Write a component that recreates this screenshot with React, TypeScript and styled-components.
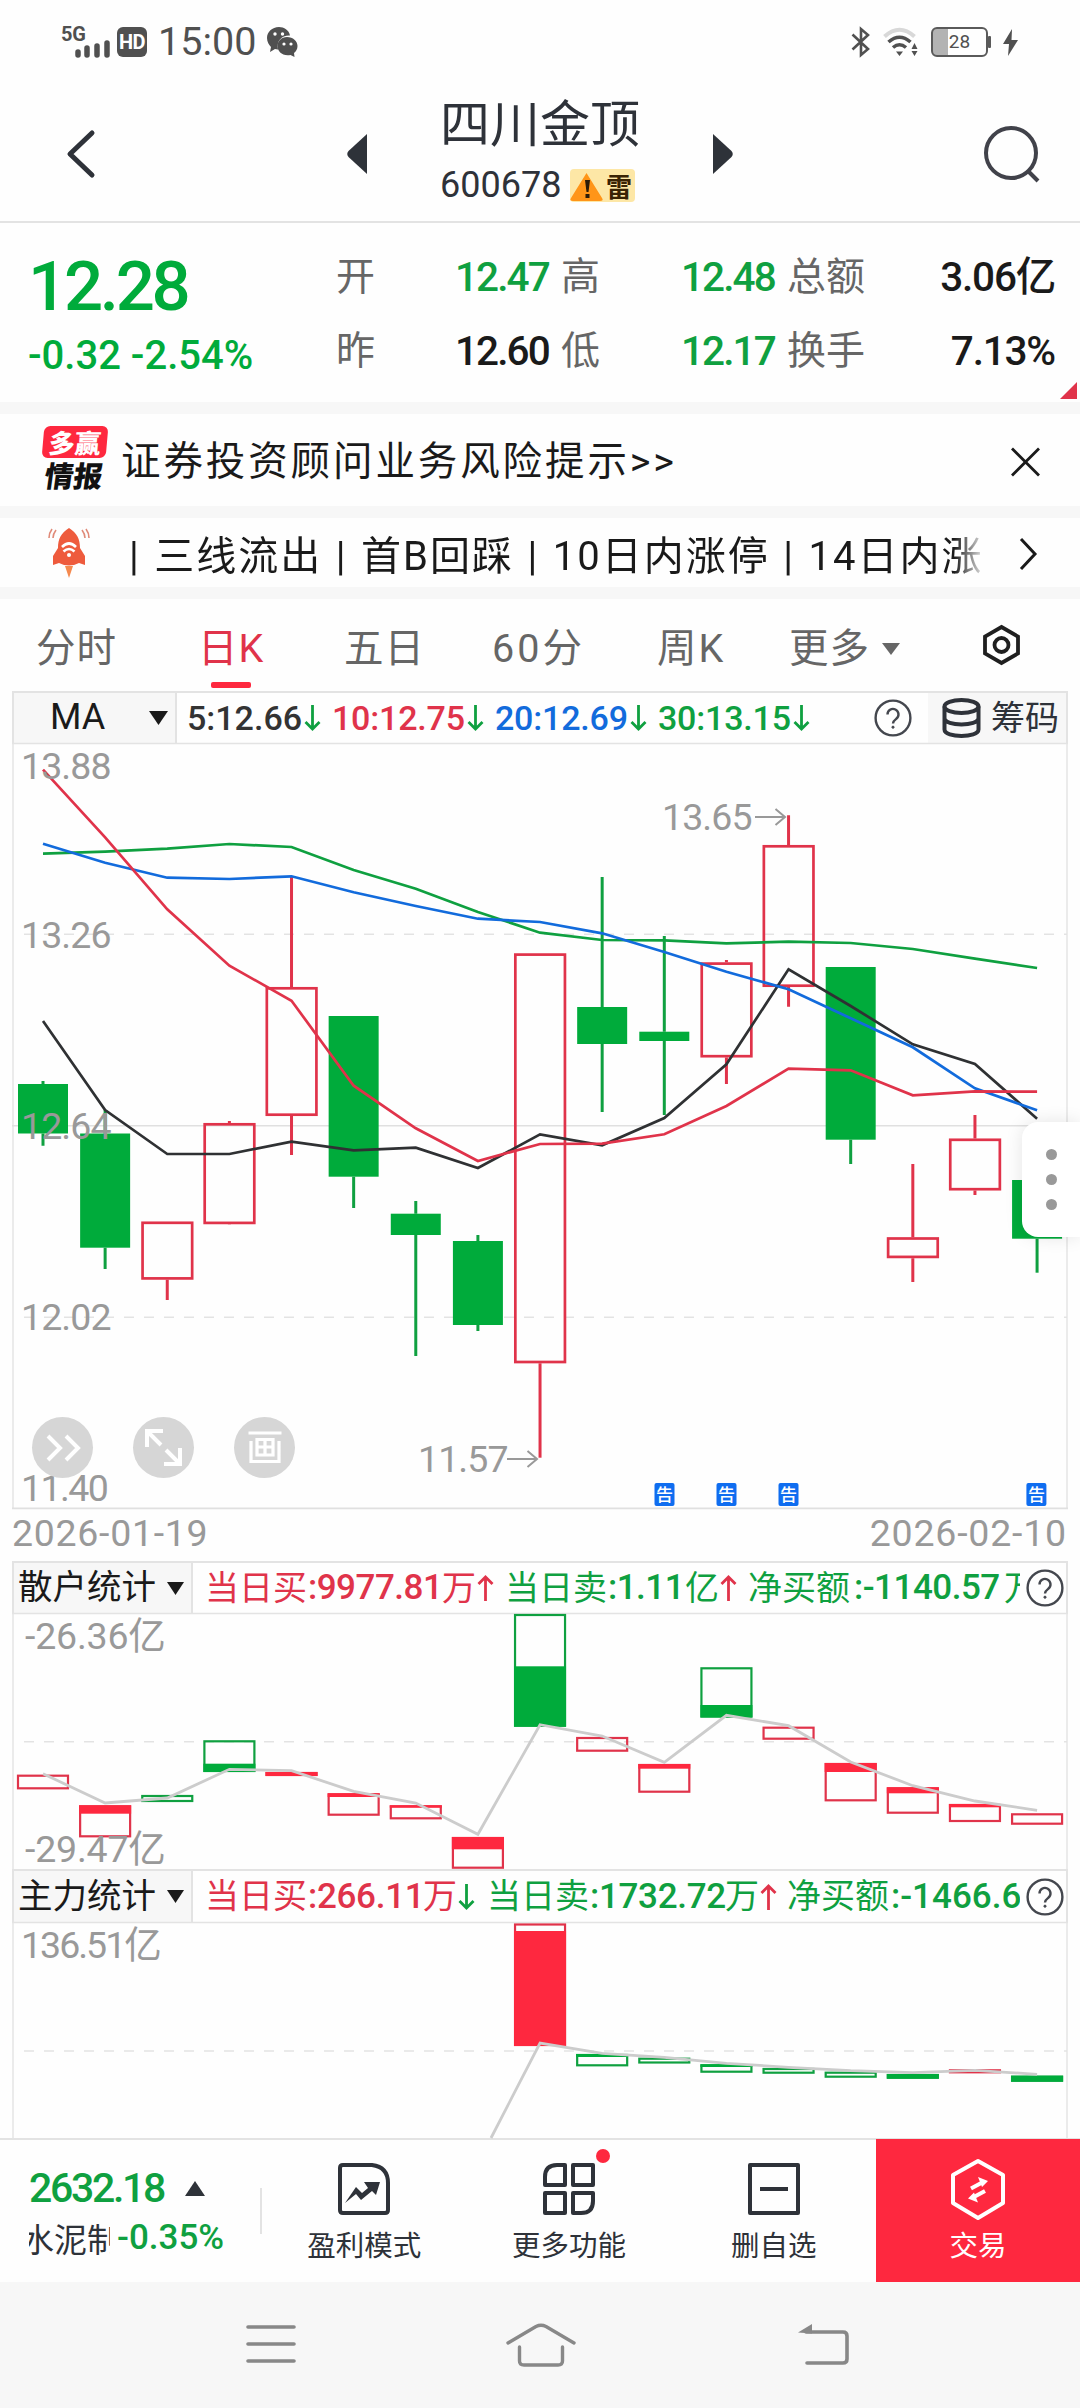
import React from 'react';
import styled, { createGlobalStyle } from 'styled-components';

const RED = '#e0334a';
const HOT = '#fe283f';
const GREEN = '#0fa040';
const FILL = '#00ab3b';
const BLUE = '#126bdc';
const INK = '#2e3239';
const GREY = '#999';
const LINE = '#e3e3e3';

const Global = createGlobalStyle`
  * { box-sizing: border-box; }
  body { margin: 0; background: #fff; }
`;

const Page = styled.div`
  width: 1080px;
  height: 2408px;
  overflow: hidden;
  display: flex;
  flex-direction: column;
  background: #fefefe;
  color: #1a1a1a;
  font-family: Roboto, 'Noto Sans CJK SC', sans-serif;
  white-space: nowrap;
`;

const Band = styled.div`
  flex: none;
  height: 12px;
  background: #f7f7f7;
`;

const Txt = styled.span<{ $size: number; $color?: string; $weight?: number; $ls?: number; $w?: number; $mt?: number }>`
  display: block;
  flex: none;
  margin-top: ${(p) => p.$mt ?? 0}px;
  font-size: ${(p) => p.$size}px;
  line-height: 1.2;
  color: ${(p) => p.$color ?? 'inherit'};
  font-weight: ${(p) => p.$weight ?? 400};
  letter-spacing: ${(p) => p.$ls ?? 0}px;
  ${(p) => (p.$w ? `width: ${p.$w}px;` : '')}
`;

const Icon = styled.svg<{ $mr?: number; $mt?: number }>`
  display: block;
  flex: none;
  overflow: visible;
  margin-right: ${(p) => p.$mr ?? 0}px;
  margin-top: ${(p) => p.$mt ?? 0}px;
`;

/* ---------- status bar ---------- */

const StatusBar = styled.header`
  flex: none;
  height: 84px;
  padding: 0 62px;
  display: flex;
  align-items: center;
  justify-content: space-between;
  color: #505050;
`;

const StatusGroup = styled.div<{ $gap: number }>`
  display: flex;
  align-items: center;
  gap: ${(p) => p.$gap}px;
`;

const HdBadge = styled.div`
  width: 30px;
  height: 30px;
  border-radius: 6px;
  background: #505050;
  color: #fff;
  font: 700 20px/30px Roboto, sans-serif;
  letter-spacing: -0.5px;
  text-align: center;
`;

const Battery = styled.div`
  width: 57px;
  height: 30px;
  border: 2.5px solid #5a5a5a;
  border-radius: 6px;
  background: linear-gradient(90deg, #b3b3b3 15px, transparent 15px);
  font: 400 19px/25px Roboto, sans-serif;
  text-align: center;
`;

/* ---------- title bar ---------- */

const TitleBar = styled.div`
  flex: none;
  height: 139px;
  border-bottom: 2px solid ${LINE};
  padding: 3px 40px 0 67px;
  display: flex;
  align-items: center;
  color: ${INK};
`;

const TitleCenter = styled.div`
  width: 387px;
  margin: 0 251px 0 252px;
  display: flex;
  align-items: center;
  justify-content: space-between;
`;

const TitleText = styled.div`
  display: flex;
  flex-direction: column;
  align-items: flex-start;
  width: 200px;
  padding-bottom: 6px;
`;

const CodeRow = styled.div`
  display: flex;
  align-items: center;
  gap: 8px;
  margin-top: 9px;
`;

const RiskBadge = styled.div`
  width: 65px;
  height: 33px;
  border-radius: 4px;
  background: #fde7a6;
  display: flex;
  align-items: center;
  font: 700 26px/33px 'Noto Sans CJK SC', sans-serif;
  color: #3a2305;
`;

/* ---------- quote ---------- */

const Quote = styled.section`
  position: relative;
  flex: none;
  height: 179px;
  padding: 0 25px 0 28px;
  display: flex;
`;

const PriceBlock = styled.div`
  width: 308px;
  padding-top: 23px;
  color: ${FILL};
`;

const Stats = styled.div`
  flex: 1;
  padding-top: 17px;
  display: grid;
  grid-template-columns: 119px 106px 120px 106px 78px 1fr;
  grid-auto-rows: 74px;
  align-items: center;
  height: 165px;
`;

const StatLabel = styled.span`
  font-size: 39px;
  line-height: 74px;
  color: #666;
`;

const StatValue = styled.span<{ $color: string; $right?: boolean }>`
  font-size: 40.5px;
  line-height: 74px;
  font-weight: 500;
  letter-spacing: ${(p) => (p.$right ? -1.2 : -1.9)}px;
  color: ${(p) => p.$color};
  text-align: ${(p) => (p.$right ? 'right' : 'left')};
`;

const Corner = styled.div`
  position: absolute;
  right: 3px;
  bottom: 3px;
  border-left: 17px solid transparent;
  border-bottom: 17px solid ${RED};
`;

/* ---------- notices ---------- */

const Notice = styled.section`
  flex: none;
  height: 92px;
  padding: 0 40px 0 41px;
  display: flex;
  align-items: center;
`;

const Logo = styled.div`
  width: 67px;
  height: 68px;
  margin-right: 13px;
  display: flex;
  flex-direction: column;
  align-items: center;
`;

const LogoTop = styled.div`
  width: 64px;
  height: 32px;
  border-radius: 6px;
  background: ${HOT};
  color: #fff;
  font: 900 26px/31px 'Noto Sans CJK SC', sans-serif;
  text-align: center;
  transform: skewX(-5deg);
`;

const LogoBottom = styled.div`
  margin-top: 2px;
  font: 900 29px/29px 'Noto Sans CJK SC', sans-serif;
  color: #111;
  transform: skewX(-8deg);
`;

const Spacer = styled.div`
  flex: 1;
`;

const Ticker = styled.section`
  flex: none;
  height: 69px;
  padding: 0 43px 0 48px;
  display: flex;
  align-items: center;
`;

const TickerText = styled.div`
  width: 855px;
  margin-left: 39px;
  overflow: hidden;
  font-size: 40px;
  line-height: 60px;
  letter-spacing: 2px;
  word-spacing: 1.6px;
  padding-top: 9px;
  mask-image: linear-gradient(90deg, #000 825px, transparent 858px);
`;

/* ---------- tabs ---------- */

const Tabs = styled.nav`
  flex: none;
  height: 92px;
  padding-left: 36px;
  display: flex;
`;

const Tab = styled.div<{ $w: number; $on?: boolean; $ls?: number }>`
  width: ${(p) => p.$w}px;
  padding-top: 22px;
  font-size: 39.5px;
  line-height: 55px;
  letter-spacing: ${(p) => p.$ls ?? 1}px;
  color: ${(p) => (p.$on ? RED : '#666')};
  display: flex;
  flex-direction: column;
`;

const Underline = styled.div`
  width: 40px;
  height: 6px;
  margin: 6px 0 0 13px;
  border-radius: 2px;
  background: ${HOT};
`;

const TabRow = styled.div`
  display: flex;
  align-items: center;
  gap: 12px;
`;

/* ---------- indicator headers ---------- */

const Bar = styled.div<{ $h: number }>`
  flex: none;
  width: 1056px;
  height: ${(p) => p.$h}px;
  margin-left: 12px;
  border: 2px solid ${LINE};
  border-bottom: 0;
  display: flex;
  align-items: center;
`;

const Selector = styled.div<{ $w: number; $pad: number }>`
  flex: none;
  width: ${(p) => p.$w}px;
  align-self: stretch;
  padding: 0 7px 0 ${(p) => p.$pad}px;
  background: #f7f7f7;
  border-right: 2px solid ${LINE};
  display: flex;
  align-items: center;
  justify-content: space-between;
`;

const Values = styled.div<{ $w: number; $pad: number }>`
  flex: none;
  width: ${(p) => p.$w}px;
  padding-left: ${(p) => p.$pad}px;
  overflow: hidden;
  display: flex;
  align-items: center;
`;

const Chips = styled.div`
  flex: 1;
  align-self: stretch;
  background: #f7f7f7;
  display: flex;
  align-items: center;
  padding-left: 14px;
  gap: 10px;
  color: ${INK};
`;

const HelpWrap = styled.div<{ $l: number; $r: number }>`
  margin: 0 ${(p) => p.$r}px 0 ${(p) => p.$l}px;
`;

/* ---------- charts ---------- */

const Plot = styled.div<{ $h: number }>`
  position: relative;
  flex: none;
  width: 1080px;
  height: ${(p) => p.$h}px;
`;

const Tools = styled.div`
  position: absolute;
  left: 32px;
  top: 674px;
  display: flex;
  gap: 40px;
`;

const ToolButton = styled.div`
  width: 61px;
  height: 61px;
  border-radius: 50%;
  background: #d6d6d6;
  display: flex;
  align-items: center;
  justify-content: center;
`;

const Drawer = styled.div`
  position: absolute;
  right: 0;
  top: 379px;
  width: 58px;
  height: 115px;
  border-radius: 16px 0 0 16px;
  background: #fff;
  box-shadow: 0 0 18px rgba(0, 0, 0, 0.1);
  display: flex;
  flex-direction: column;
  align-items: center;
  justify-content: center;
  gap: 14px;
`;

const Dot = styled.i`
  width: 11px;
  height: 11px;
  border-radius: 50%;
  background: ${GREY};
`;

const Dates = styled.div`
  flex: none;
  height: 52px;
  padding: 0 13px 4px 12px;
  display: flex;
  align-items: center;
  justify-content: space-between;
`;

/* ---------- bottom ---------- */

const Bottom = styled.footer`
  flex: none;
  height: 144px;
  border-top: 2px solid ${LINE};
  display: flex;
  color: ${INK};
`;

const IndexBlock = styled.div`
  width: 262px;
  padding: 24px 0 0 29px;
`;

const IndexRow = styled.div<{ $gap: number }>`
  display: flex;
  align-items: center;
  gap: ${(p) => p.$gap}px;
`;

const Sector = styled.div`
  width: 81px;
  height: 50px;
  padding-top: 3px;
  overflow: hidden;
  display: flex;
  font-size: 33px;
  line-height: 50px;
  text-indent: -8px;
`;

const Divider = styled.div`
  width: 2px;
  height: 46px;
  margin: 48px 0 0 -2px;
  background: ${LINE};
`;

const Action = styled.div<{ $hot?: boolean }>`
  position: relative;
  flex: none;
  width: ${(p) => (p.$hot ? 204 : 204.7)}px;
  margin-top: ${(p) => (p.$hot ? -1 : 0)}px;
  padding-top: ${(p) => (p.$hot ? 20 : 23)}px;
  background: ${(p) => (p.$hot ? HOT : 'transparent')};
  color: ${(p) => (p.$hot ? '#fff' : INK)};
  display: flex;
  flex-direction: column;
  align-items: center;
  font-size: 28.5px;
  line-height: 40px;
  gap: ${(p) => (p.$hot ? 7 : 12)}px;
`;

const Badge = styled.i`
  position: absolute;
  right: 61px;
  top: 9px;
  width: 14px;
  height: 14px;
  border-radius: 50%;
  background: ${HOT};
`;

const NavBar = styled.div`
  flex: none;
  height: 126px;
  padding: 0 0 1px 246px;
  background: #f7f7f7;
  display: grid;
  grid-template-columns: 260px 292px 51px;
  align-items: center;
`;

/* ---------- small drawings ---------- */

const Caret = ({ w = 18, h = 13, color = '#1a1a1a', up = false }) => (
  <Icon width={w} height={h} viewBox={`0 0 ${w} ${h}`}>
    <path d={up ? `M0 ${h}L${w / 2} 0L${w} ${h}Z` : `M0 0H${w}L${w / 2} ${h}Z`} fill={color} />
  </Icon>
);

const Arrow = ({ up = false, color = GREEN, gap = 12 }) => (
  <Icon width={17} height={26} viewBox="0 0 17 26" $mr={gap}>
    <path
      d={up ? 'M8.5 26V2M1.5 9L8.5 2L15.5 9' : 'M8.5 0V24M1.5 17L8.5 24L15.5 17'}
      fill="none"
      stroke={color}
      strokeWidth={2.8}
    />
  </Icon>
);

const Help = () => (
  <Icon width={38} height={38} viewBox="0 0 38 38" fill="none" stroke="#44474e" strokeWidth={2.4}>
    <circle cx="19" cy="19" r="17.4" />
    <path d="M13.5 15.5a5.5 5.5 0 1 1 8.8 4.3c-2.2 1.7-3.3 2.4-3.3 4.6" />
    <circle cx="19" cy="28.2" r="1.1" fill="#44474e" strokeWidth={1} />
  </Icon>
);

const cx = (i: number) => 43 + 62.13 * i;
const pts = (ys: number[], from = 0) => ys.map((y, i) => `${cx(i + from)},${y}`).join(' ');

type Candle = [up: boolean, high: number, top: number, bottom: number, low: number];
const candles: Candle[] = [
  [false, 1081, 1084, 1133.5, 1145.7],
  [false, 1110, 1133.5, 1247.7, 1269],
  [true, 1221.5, 1221.5, 1279.7, 1300],
  [true, 1121, 1123, 1224.2, 1224],
  [true, 877, 987, 1116, 1155],
  [false, 1016, 1016, 1176.7, 1208],
  [false, 1201, 1213.7, 1235, 1356],
  [false, 1235, 1241, 1325, 1331],
  [true, 953.3, 953.3, 1363.3, 1457.7],
  [false, 877, 1007, 1044, 1112],
  [false, 936, 1031.7, 1041, 1115],
  [true, 960, 962.3, 1057.5, 1084],
  [true, 815.3, 845, 987, 1006.7],
  [false, 967, 967, 1139.7, 1164],
  [true, 1164, 1237.2, 1258.2, 1282],
  [true, 1115, 1138.5, 1190.5, 1195],
  [false, 1180, 1180, 1238.7, 1272.7],
];

const averages: [string, number[]][] = [
  ['#2f3133', [1021, 1110, 1154, 1154, 1141.7, 1150.3, 1147.7, 1168, 1134.3, 1145.3, 1118, 1064.3, 969.3, 1006, 1044.3, 1064, 1118.7]],
  [GREEN, [853.7, 851.7, 848.7, 844, 847, 870, 888.7, 912, 932.7, 940, 940.3, 943.3, 941.7, 943, 949, 958.7, 968]],
  [BLUE, [843.7, 862.7, 877.7, 879, 876.3, 892.3, 906, 918.7, 922, 933.3, 952, 971.7, 989.3, 1018.3, 1047.3, 1088.3, 1110.3]],
  [RED, [769.7, 837.3, 909.3, 965.7, 1000.7, 1085.7, 1128.3, 1161, 1144, 1143.7, 1134.3, 1106, 1068.7, 1070.3, 1095.3, 1091.3, 1091.7]],
];

type Flow = [i: number, up: boolean, top: number, bottom: number, fillFrom: number, fillTo: number];
const retail: Flow[] = [
  [0, true, 1774.7, 1789.3, 0, 0],
  [1, true, 1805.3, 1837.3, 1805.3, 1813.7],
  [2, false, 1795, 1802, 0, 0],
  [3, false, 1740.3, 1772, 1763.7, 1772],
  [4, true, 1772, 1776, 1772, 1776],
  [5, true, 1793.3, 1815.7, 1793.3, 1797],
  [6, true, 1805.3, 1819.3, 1805.3, 1807.7],
  [7, true, 1837, 1868.7, 1837, 1849.3],
  [8, false, 1614, 1726.7, 1666.3, 1726.7],
  [9, true, 1737, 1751.7, 0, 0],
  [10, true, 1764, 1792.7, 1764, 1768.7],
  [11, false, 1667.3, 1717.5, 1705, 1717.5],
  [12, true, 1726.7, 1739.7, 0, 0],
  [13, true, 1763, 1801.3, 1763, 1772],
  [14, true, 1787.3, 1813.7, 1787.3, 1793.3],
  [15, true, 1804, 1822, 1804, 1807.3],
  [16, true, 1813.3, 1824.7, 0, 0],
];
const retailLine = [1773.7, 1803, 1798, 1769.3, 1770.7, 1791.3, 1803, 1834.3, 1724.7, 1736, 1762.3, 1715.3, 1725.7, 1762, 1785.7, 1801, 1810.3];

const major: Flow[] = [
  [8, true, 1923.5, 2046, 1931, 2046],
  [9, false, 2054, 2066.3, 2054, 2057],
  [10, false, 2057.7, 2063.5, 0, 0],
  [11, false, 2064.3, 2072.7, 2064.3, 2067],
  [12, false, 2068, 2073.7, 0, 0],
  [13, false, 2071.7, 2077.7, 0, 0],
  [14, false, 2074, 2078.7, 2074, 2078.7],
  [15, true, 2069.3, 2073.3, 0, 0],
  [16, false, 2075.7, 2081.7, 2075.7, 2081.7],
];
const majorLine = [2043, 2053.3, 2057.3, 2063.3, 2067.3, 2070.7, 2072.7, 2070.3, 2074.3];

const AxisText = styled.text<{ $ls?: number }>`
  font-family: Roboto, 'Noto Sans CJK SC', sans-serif;
  font-size: 37.5px;
  letter-spacing: ${(p) => p.$ls ?? -0.9}px;
  fill: ${GREY};
`;

const BadgeText = styled.text`
  font-family: 'Noto Sans CJK SC', sans-serif;
  font-size: 17px;
  font-weight: 500;
  fill: #fff;
  text-anchor: middle;
`;

const Frame = ({ top, height, mids }: { top: number; height: number; mids: number[] }) => (
  <g fill="none" stroke={LINE}>
    <path d={`M13 ${top}V${top + height}M1067 ${top}V${top + height}M12 ${top + 0.5}H1068`} strokeWidth={1.4} />
    {mids.map((y) => (
      <path key={y} d={`M24 ${y}H1067`} strokeWidth={1.4} strokeDasharray="10 10" />
    ))}
  </g>
);

const KChart = () => (
  <Icon width={1080} height={766} viewBox="0 743 1080 766">
    <Frame top={743} height={765} mids={[934.3, 1317.3]} />
    <path d="M12 1125.7H1067M12 1508.4H1068" stroke="#e0e0e0" strokeWidth={1.6} />
    {candles.map(([up, high, top, bottom, low], i) => (
      <g key={i} stroke={up ? RED : GREEN} strokeWidth={3}>
        <path d={`M${cx(i)} ${high}V${top}M${cx(i)} ${bottom}V${low}`} />
        {up ? (
          <rect x={cx(i) - 24.7} y={top + 1.3} width={49.6} height={bottom - top - 2.6} fill="none" strokeWidth={2.7} />
        ) : (
          <rect x={cx(i) - 25} y={top} width={50} height={bottom - top} fill={FILL} stroke="none" />
        )}
      </g>
    ))}
    {averages.map(([color, ys]) => (
      <polyline key={color} points={pts(ys)} fill="none" stroke={color} strokeWidth={2.7} />
    ))}
    {([['13.88', 778.5, -0.9], ['13.26', 947.5, -0.9], ['12.64', 1139.3, -0.9], ['12.02', 1330.3, -0.9], ['11.40', 1500.5, -1.6]] as const).map(([t, y, ls]) => (
      <AxisText key={t} x={21} y={y} $ls={ls}>{t}</AxisText>
    ))}
    <AxisText x={662} y={830}>13.65</AxisText>
    <AxisText x={418} y={1472}>11.57</AxisText>
    <path d="M755 817H785M775.5 809L785 817L775.5 825M507 1459H537M527.5 1451L537 1459L527.5 1467" fill="none" stroke={GREY} strokeWidth={2} />
    {[664.5, 726.5, 788.5, 1036.4].map((x) => (
      <g key={x}>
        <rect x={x - 10} y={1483} width={20} height={23} rx={2} fill="#0f6df0" />
        <BadgeText x={x} y={1501}>告</BadgeText>
      </g>
    ))}
  </Icon>
);

const FlowChart = ({ top, height, mid, rows, line, labels }: {
  top: number; height: number; mid: number; rows: Flow[]; line: string; labels: [string, number][];
}) => (
  <Icon width={1080} height={height} viewBox={`0 ${top} 1080 ${height}`}>
    <Frame top={top} height={height} mids={[mid]} />
    {rows.map(([i, up, y1, y2, f1, f2]) => (
      <g key={i}>
        <rect x={cx(i) - 25} y={y1 + 1} width={50} height={Math.max(1, y2 - y1 - 2)} fill="none" stroke={up ? RED : GREEN} strokeWidth={2.2} />
        {f2 > f1 && <rect x={cx(i) - 26} y={f1} width={52} height={f2 - f1} fill={up ? HOT : FILL} />}
      </g>
    ))}
    <polyline points={line} fill="none" stroke="#ccc" strokeWidth={2.8} />
    {labels.map(([t, y]) => (
      <AxisText key={t} x={t[0] === '-' ? 25 : 21} y={y} $ls={t[0] === '-' ? -0.2 : -2}>{t}</AxisText>
    ))}
  </Icon>
);

const FlowHeader = ({ name, h, children }: { name: string; h: number; children: React.ReactNode }) => (
  <Bar $h={h}>
    <Selector $w={179} $pad={4}>
      <Txt $size={34.5}>{name}</Txt>
      <Caret w={17} h={13} />
    </Selector>
    <Values $w={827} $pad={12}>{children}</Values>
    <HelpWrap $l={6} $r={0}><Help /></HelpWrap>
  </Bar>
);

const Cn = ({ c, w, children }: { c: string; w: number; children: React.ReactNode }) => (
  <Txt $size={34} $color={c} $w={w}>{children}</Txt>
);
const Num = ({ c, w, ls = -0.5, children }: { c: string; w: number; ls?: number; children: React.ReactNode }) => (
  <Txt $size={35} $color={c} $w={w} $weight={500} $ls={ls}>{children}</Txt>
);

export default function App() {
  return (
    <Page>
      <Global />
      <StatusBar>
        <StatusGroup $gap={7}>
          <Icon width={48} height={32} viewBox="62 25 48 32">
            <text x="61" y="39.5" fontSize="20" fontWeight="700" fontFamily="Roboto, sans-serif" fill="#505050" textLength="25">5G</text>
            <path d="M78 51V54M87 47V54M97 45V54M107 42V54" stroke="#505050" strokeWidth={5.5} strokeLinecap="round" />
          </Icon>
          <StatusGroup $gap={11}>
            <HdBadge>HD</HdBadge>
            <Txt $size={39.5} $w={98}>15:00</Txt>
            <Icon width={31} height={30} viewBox="0 0 31 30" fill="#505050">
              <path d="M12 0C5 0 0 5 0 11c0 4 2 7 4 9l-1 5 5-3 3 .5C9 14 15 8 23 8.500C22 3 17 0 12 0Z" />
              <path d="M20 10c6 0 10.500 4 10.500 9 0 3-1.500 5.500-3.500 7l.5 4-4-2c-8 1.500-13-3.500-13-9 0-5 4-9 9.500-9Z" />
              <g fill="#fff"><circle cx="8" cy="7" r="1.700" /><circle cx="15.500" cy="7" r="1.700" /><circle cx="17" cy="17" r="1.600" /><circle cx="24" cy="17" r="1.600" /></g>
            </Icon>
          </StatusGroup>
        </StatusGroup>
        <StatusGroup $gap={12}>
          <Icon width={20} height={30} viewBox="0 0 20 30" fill="none" stroke="#505050" strokeWidth={2.6}>
            <path d="M1.500 7.500L17 22L10 28V2L17 8L1.500 22.500" />
          </Icon>
          <Icon width={36} height={28} viewBox="0 0 36 28" fill="none" strokeWidth={4}>
            <path d="M1.500 8.500Q16.500 -5 31.500 8.500" stroke="#d8d8d8" />
            <path d="M5.500 14Q16.500 4.500 27.500 14M10 19.500Q16.500 14 23 19.500" stroke="#505050" strokeWidth={3.6} />
            <path d="M13 23.500H20L16.500 28ZM28.500 21L31.500 15L34.500 21ZM28.500 23H34.500L31.500 28Z" fill="#505050" stroke="none" />
          </Icon>
          <StatusGroup $gap={0}>
            <Battery>28</Battery>
            <Icon width={3} height={12} viewBox="0 0 3 12"><rect width="3" height="12" rx="1" fill="#5a5a5a" /></Icon>
          </StatusGroup>
          <Icon width={15} height={27} viewBox="0 0 15 27"><path d="M9 0L0 15H6L5 27L15 11H8.500Z" fill="#505050" /></Icon>
        </StatusGroup>
      </StatusBar>

      <TitleBar>
        <Icon width={28} height={48} viewBox="0 0 28 48" fill="none" stroke={INK} strokeWidth={5} strokeLinecap="round" strokeLinejoin="round">
          <path d="M25 3L3 24L25 45" />
        </Icon>
        <TitleCenter>
          <Icon width={20} height={40} viewBox="0 0 20 40" fill={INK}><path d="M20 0V40L1.500 23Q-1 20 1.500 17Z" /></Icon>
          <TitleText>
            <Txt $size={50} $color={INK}>四川金顶</Txt>
            <CodeRow>
              <Txt $size={36} $w={122}>600678</Txt>
              <RiskBadge>
                <Icon width={36} height={33} viewBox="0 0 36 33">
                  <path d="M16.500 4L1 29Q-1 32 3 32H30Q34 32 32 29Z" fill="#ff9518" />
                  <path d="M15 11H20L18.500 23H16.500ZM15.500 25H19.500V29H15.500Z" fill="#2b1b08" />
                </Icon>
                雷
              </RiskBadge>
            </CodeRow>
          </TitleText>
          <Icon width={20} height={40} viewBox="0 0 20 40" fill={INK}><path d="M0 0V40L18.500 23Q21 20 18.500 17Z" /></Icon>
        </TitleCenter>
        <Icon width={56} height={56} viewBox="0 0 56 56" fill="none" stroke="#41424a" strokeWidth={4}>
          <circle cx="27" cy="27" r="25" />
          <path d="M44 45L54 55" />
        </Icon>
      </TitleBar>

      <Quote>
        <PriceBlock>
          <Txt $size={69} $weight={500} $ls={-3.3}>12.28</Txt>
          <Txt $size={40} $weight={500} $ls={0} $mt={3}>-0.32 -2.54%</Txt>
        </PriceBlock>
        <Stats>
          <StatLabel>开</StatLabel><StatValue $color={GREEN}>12.47</StatValue>
          <StatLabel>高</StatLabel><StatValue $color={GREEN}>12.48</StatValue>
          <StatLabel>总额</StatLabel><StatValue $color="#1a1a1a" $right>3.06亿</StatValue>
          <StatLabel>昨</StatLabel><StatValue $color="#1a1a1a">12.60</StatValue>
          <StatLabel>低</StatLabel><StatValue $color={GREEN}>12.17</StatValue>
          <StatLabel>换手</StatLabel><StatValue $color="#1a1a1a" $right>7.13%</StatValue>
        </Stats>
        <Corner />
      </Quote>
      <Band />

      <Notice>
        <Logo>
          <LogoTop>多赢</LogoTop>
          <LogoBottom>情报</LogoBottom>
        </Logo>
        <Txt $size={39.5} $ls={2.9} $mt={4}>证券投资顾问业务风险提示&gt;&gt;</Txt>
        <Spacer />
        <Icon $mt={4} width={29} height={28} viewBox="0 0 29 28" stroke="#1a1a1a" strokeWidth={2.8}><path d="M1 0.500L28 27.500M28 0.500L1 27.500" /></Icon>
      </Notice>
      <Band />

      <Ticker>
        <Icon width={42} height={50} viewBox="0 0 42 50">
          <path d="M21 0C29 5 32 11 32 20L37 28V37L31 35Q21 40 11 35L5 37V28L10 20C10 11 13 5 21 0Z" fill="#ee5b3d" />
          <path d="M17 38H25L21 50Z" fill="#f5894f" />
          <path d="M14 19Q21 12 28 19M15.500 23.500Q21 18.500 26.500 23.500" fill="none" stroke="#fff" strokeWidth={2.6} />
          <circle cx="21" cy="27" r="2" fill="#fff" />
          <path d="M8 2Q5 6 5 10M4 1Q1 5 1 10M34 2Q37 6 37 10M38 1Q41 5 41 10" fill="none" stroke="#e08a78" strokeWidth={1.6} />
        </Icon>
        <TickerText>| 三线流出 | 首B回踩 | 10日内涨停 | 14日内涨</TickerText>
        <Spacer />
        <Icon $mt={2} width={17} height={32} viewBox="0 0 17 32" fill="none" stroke="#1a1a1a" strokeWidth={3}><path d="M1 1L15 16L1 31" /></Icon>
      </Ticker>
      <Band />

      <Tabs>
        <Tab $w={162}>分时</Tab>
        <Tab $w={146} $on>日K<Underline /></Tab>
        <Tab $w={148}>五日</Tab>
        <Tab $w={165} $ls={3}>60分</Tab>
        <Tab $w={132} $ls={2}>周K</Tab>
        <Tab $w={194}><TabRow>更多<Caret w={18} h={12} color="#666" /></TabRow></Tab>
        <Tab $w={60}>
          <Icon $mt={4} width={37} height={40} viewBox="0 0 37 40" fill="none" stroke="#1f1f1f" strokeWidth={3.8}>
            <path d="M18.500 2L35 11.500V28.500L18.500 38L2 28.500V11.500Z" />
            <circle cx="18.500" cy="20" r="7" />
          </Icon>
        </Tab>
      </Tabs>

      <Bar $h={52}>
        <Selector $w={163} $pad={36}>
          <Txt $size={36}>MA</Txt>
          <Caret w={19} h={14} />
        </Selector>
        <Values $w={669} $pad={10}>
          <Txt $size={34} $weight={500} $color="#333" $w={117}>5:12.66</Txt><Arrow gap={11} />
          <Txt $size={34} $weight={500} $color={RED} $w={135} $ls={-0.2}>10:12.75</Txt><Arrow gap={11} />
          <Txt $size={34} $weight={500} $color={BLUE} $w={135} $ls={-0.2}>20:12.69</Txt><Arrow gap={11} />
          <Txt $size={34} $weight={500} $color={GREEN} $w={135} $ls={-0.2}>30:13.15</Txt><Arrow />
        </Values>
        <HelpWrap $l={28} $r={16}><Help /></HelpWrap>
        <Chips>
          <Icon width={39} height={40} viewBox="0 0 39 40" fill="none" stroke={INK} strokeWidth={4}>
            <ellipse cx="19.500" cy="8.500" rx="17" ry="6.500" />
            <path d="M2.500 8.500V31.500C2.500 40 36.500 40 36.500 31.500V8.500M2.500 20C2.500 28.500 36.500 28.500 36.500 20" />
          </Icon>
          <Txt $size={34}>筹码</Txt>
        </Chips>
      </Bar>

      <Plot $h={766}>
        <KChart />
        <Tools>
          <ToolButton>
            <Icon width={34} height={26} viewBox="0 0 34 26" fill="none" stroke="#fff" strokeWidth={4}><path d="M2 1L14 13L2 25M20 1L32 13L20 25" /></Icon>
          </ToolButton>
          <ToolButton>
            <Icon width={37} height={37} viewBox="0 0 37 37" fill="none" stroke="#fff" strokeWidth={4}><path d="M18 2H2V18M2 2L16 16M35 19V35H19M35 35L21 21" /></Icon>
          </ToolButton>
          <ToolButton>
            <Icon width={34} height={33} viewBox="0 0 34 33" fill="none" stroke="#fff" strokeWidth={3.2}><path d="M0.500 2H33.500M3 10V30.500H31V10M9 8.500H25V24H9ZM17 8.500V24M9 16H25" /></Icon>
          </ToolButton>
        </Tools>
        <Drawer><Dot /><Dot /><Dot /></Drawer>
      </Plot>

      <Dates>
        <Txt $size={37.5} $color={GREY} $ls={0.7}>2026-01-19</Txt>
        <Txt $size={37.5} $color={GREY} $ls={0.8}>2026-02-10</Txt>
      </Dates>

      <FlowHeader name="散户统计" h={52}>
        <Cn c={RED} w={103}>当日买</Cn><Num c={RED} w={134}>:9977.81</Num><Cn c={RED} w={35}>万</Cn><Arrow up color={RED} gap={11} />
        <Cn c={GREEN} w={103}>当日卖</Cn><Num c={GREEN} w={77}>:1.11</Num><Cn c={GREEN} w={35}>亿</Cn><Arrow up color={RED} gap={11} />
        <Cn c={GREEN} w={106}>净买额</Cn><Num c={GREEN} w={150}>:-1140.57</Num><Cn c={GREEN} w={35}>万</Cn>
      </FlowHeader>
      <Plot $h={256}>
        <FlowChart top={1613} height={256} mid={1741.7} rows={retail} line={pts(retailLine)} labels={[['-26.36亿', 1649], ['-29.47亿', 1862]]} />
      </Plot>

      <FlowHeader name="主力统计" h={53}>
        <Cn c={RED} w={103}>当日买</Cn><Num c={RED} w={115} ls={-0.3}>:266.11</Num><Cn c={RED} w={35}>万</Cn><Arrow gap={12} />
        <Cn c={GREEN} w={103}>当日卖</Cn><Num c={GREEN} w={135} ls={-0.3}>:1732.72</Num><Cn c={GREEN} w={35}>万</Cn><Arrow up color={RED} gap={10} />
        <Cn c={GREEN} w={104}>净买额</Cn><Num c={GREEN} w={130} ls={0}>:-1466.6</Num>
      </FlowHeader>
      <Plot $h={216}>
        <FlowChart top={1922} height={216} mid={2051} rows={major} line={`491,2138 ${pts(majorLine, 8)}`} labels={[['136.51亿', 1958]]} />
      </Plot>

      <Bottom>
        <IndexBlock>
          <IndexRow $gap={21}>
            <Txt $size={41} $weight={500} $color={GREEN} $ls={-2.3}>2632.18</Txt>
            <Caret w={20} h={15} color={INK} up />
          </IndexRow>
          <IndexRow $gap={7}>
            <Sector>水泥制</Sector>
            <Txt $size={35} $weight={500} $color={GREEN} $ls={0}>-0.35%</Txt>
          </IndexRow>
        </IndexBlock>
        <Divider />
        <Action>
          <Icon width={52} height={52} viewBox="0 0 52 52" fill="none" stroke={INK} strokeWidth={4} strokeLinejoin="round">
            <path d="M5 2H34Q50 4 50 20V47Q50 50 47 50H5Q2 50 2 47V5Q2 2 5 2Z" />
            <path d="M7 40L18 24L24 30L30 25L26 19H42L38 32L34 28L23 37L18 31Z" fill={INK} stroke="none" />
          </Icon>
          盈利模式
        </Action>
        <Action>
          <Icon width={52} height={52} viewBox="0 0 52 52" fill="none" stroke={INK} strokeWidth={4} strokeLinejoin="round">
            <path d="M22 2V22H2V14Q2 2 14 2ZM30 2H50V22H30ZM2 30H22V50H2ZM30 30H50V38Q50 50 38 50H30Z" />
          </Icon>
          更多功能
          <Badge />
        </Action>
        <Action>
          <Icon width={52} height={52} viewBox="0 0 52 52" fill="none" stroke={INK} strokeWidth={4} strokeLinejoin="round">
            <path d="M2 2H50V50H2ZM12 26H40" />
          </Icon>
          删自选
        </Action>
        <Action $hot>
          <Icon width={54} height={61} viewBox="0 0 54 61" fill="none" stroke="#fff" strokeWidth={4} strokeLinejoin="round">
            <path d="M27 2L52 16V44L27 59L2 44V16Z" />
            <path d="M20 29.500L33 22.500M34 32L21 39" strokeWidth={4} />
            <path d="M27 18L37 22L31 28ZM27 43.500L17 39.500L23 33.500Z" fill="#fff" stroke="none" />
          </Icon>
          交易
        </Action>
      </Bottom>

      <NavBar>
        <Icon width={50} height={40} viewBox="0 0 50 40" stroke="#888" strokeWidth={3.6} strokeLinecap="round"><path d="M2 2H48M2 19H48M2 36H48" /></Icon>
        <Icon width={70} height={44} viewBox="0 0 70 44" fill="none" stroke="#888" strokeWidth={3.4} strokeLinecap="round" strokeLinejoin="round">
          <path d="M2 20L30 3.500Q35 1 40 3.500L68 20M13.500 24V38Q13.500 42 18 42H52Q56.500 42 56.500 38V24" />
        </Icon>
        <Icon width={51} height={42} viewBox="0 0 51 42" fill="none" stroke="#888" strokeWidth={3.6} strokeLinecap="round" strokeLinejoin="round">
          <path d="M8 8H45Q49 8 49 12V35Q49 39 45 39H9" />
          <path d="M0 8.500L14 0V9.500Z" fill="#888" stroke="none" />
        </Icon>
      </NavBar>
    </Page>
  );
}
